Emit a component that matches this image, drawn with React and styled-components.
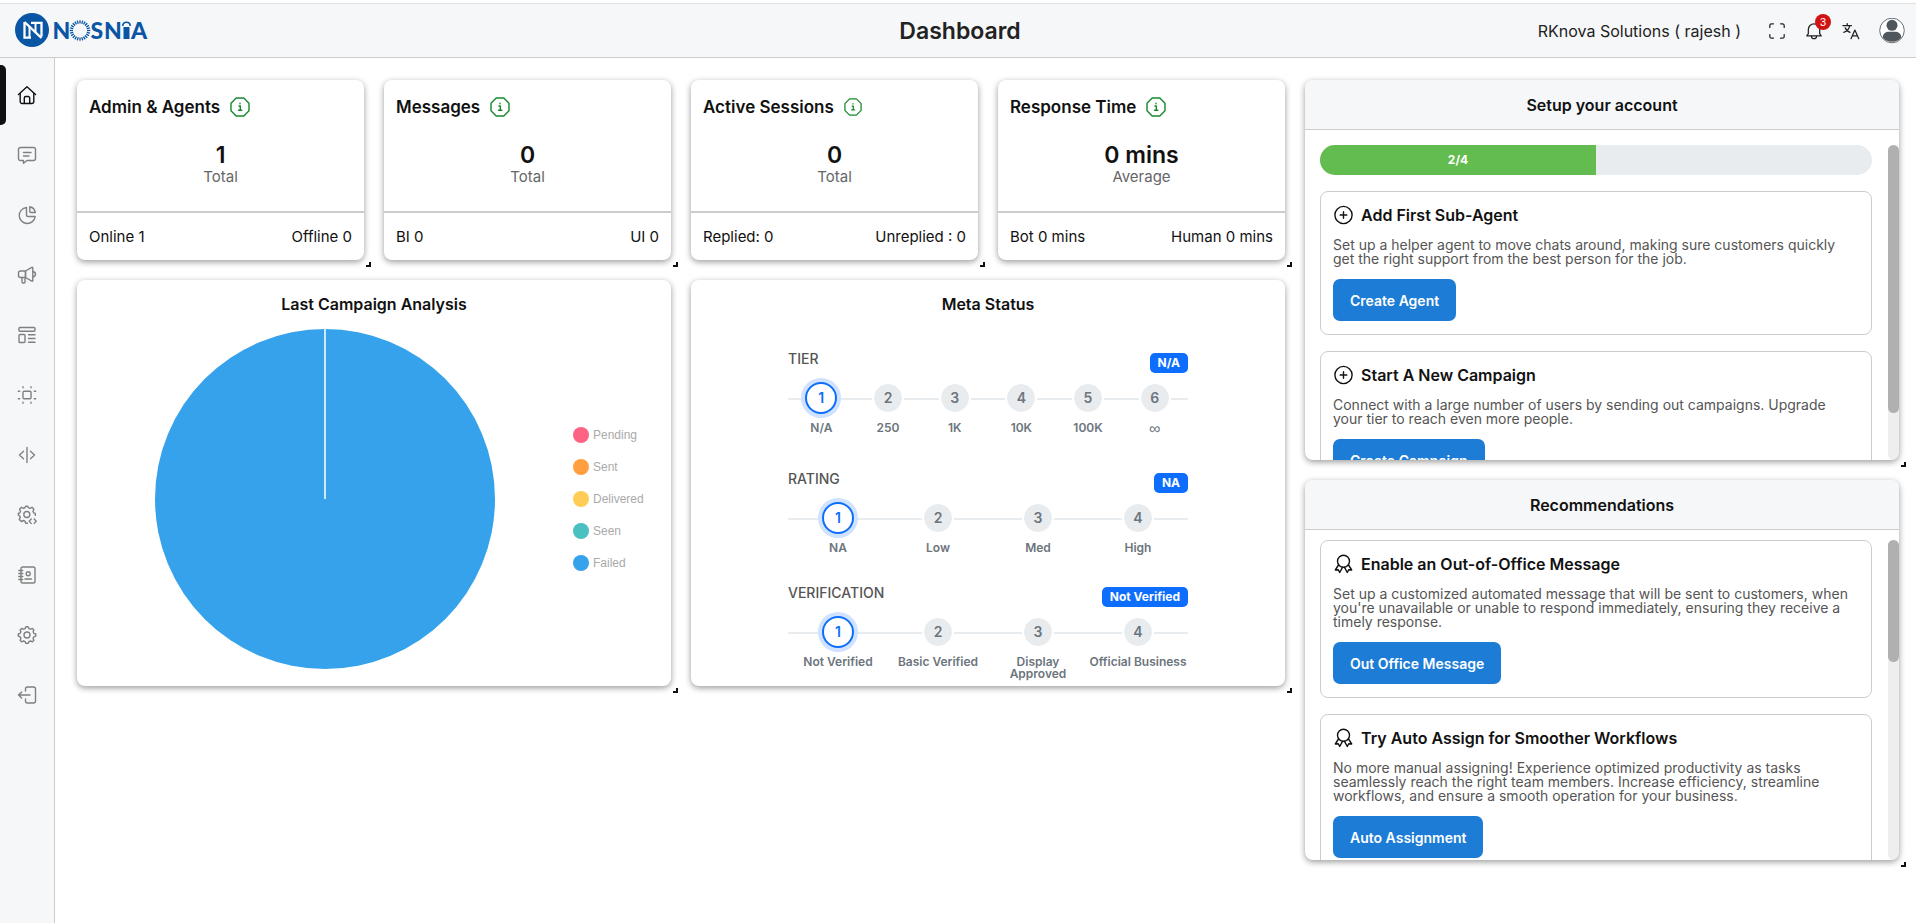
import React from "react";
import styled, { createGlobalStyle } from "styled-components";

const GlobalStyle = createGlobalStyle`
  * {
    box-sizing: border-box;
  }
  body {
    margin: 0;
    background: #fff;
    color: #111;
    font-family: Inter, "Liberation Sans", sans-serif;
  }
  h1, h2, h3, p, ul, ol {
    margin: 0;
    padding: 0;
  }
  ul, ol {
    list-style: none;
  }
`;

const stroke = {
  fill: "none",
  stroke: "currentColor",
  strokeWidth: 1.4,
  strokeLinecap: "round",
  strokeLinejoin: "round",
};

const icons = {
  home: (
    <>
      <path d="M1.5 9.6 10 1.8l8.5 7.8" />
      <path d="M3.2 8.500V16.500a2 2 0 0 0 2 2h9.600a2 2 0 0 0 2-2V8.500" />
      <path d="M7.300 18.300V13a1.500 1.500 0 0 1 1.500-1.500h2.400A1.500 1.500 0 0 1 12.700 13v5.300" />
    </>
  ),
  chat: (
    <>
      <path d="M3.500 2.500h13a2 2 0 0 1 2 2v9a2 2 0 0 1-2 2h-6.500l-3.500 2.700v-2.700h-3a2 2 0 0 1-2-2v-9a2 2 0 0 1 2-2z" />
      <path d="M6.500 7.500h7.500M6.500 11h5.500" />
    </>
  ),
  pie: (
    <>
      <path d="M9.500 2.500a8 8 0 1 0 8.700 9h-7.200A1.500 1.500 0 0 1 9.500 10z" />
      <path d="M12.800 1.800a7 7 0 0 1 5.500 5.700h-4.500a1 1 0 0 1-1-1z" />
    </>
  ),
  megaphone: (
    <>
      <path d="M8.500 6H3.500a2 2 0 0 0-2 2v2.500a2 2 0 0 0 2 2h5z" />
      <path d="M8.500 6 14.800 2.300a.7.700 0 0 1 1 .6v12.700a.7.700 0 0 1-1 .600L8.500 12.500z" />
      <path d="M16 6.800c1.600 0 2.500 1 2.500 2.400s-.9 2.400-2.500 2.400" />
      <path d="M5 12.500v4.500a1 1 0 0 0 1 1h1a1 1 0 0 0 1-1v-4.500" />
    </>
  ),
  template: (
    <>
      <rect x="2" y="2.500" width="16" height="3.700" rx="1" />
      <rect x="2" y="9.500" width="6" height="8" rx="1" />
      <path d="M11.500 9.800H18M11.500 13.500H18M11.500 17.200H18" />
    </>
  ),
  flow: (
    <>
      <rect x="6" y="6.200" width="8" height="7.600" rx="1" />
      <path d="M6 1.800v1M14 1.800v1M6 17.200v1M14 17.200v1M1.300 6.200h1.400M1.300 13.800h1.400M17.300 6.200h1.400M17.300 13.800h1.400" />
    </>
  ),
  code: <path d="M10 2.500v15M6.500 6.300 2.500 10l4 3.700M13.500 6.300l4 3.700-4 3.700" />,
  devSettings: (
    <>
      <path d="M10.500 18.300H8.700l-.7-2.100-1.600-.7-2 1L2.300 14.400l1-2-.7-1.600L1.300 10V8.500l1.500-.7.700-1.600-1-2 2-1.900 2 1 1.500-.7.700-1.300h2l.7 1.300 1.600.7 2-1 1.900 2-.9 1.900.6 1.600 1.700.6v2" />
      <circle cx="9.800" cy="9.500" r="3" />
      <path d="m14.200 14-2 2.200 2 2.200M17.200 14l2 2.200-2 2.200" />
    </>
  ),
  contacts: (
    <>
      <rect x="4" y="2" width="14" height="16" rx="1.800" />
      <circle cx="11.200" cy="8.800" r="2" />
      <path d="M8 14h6.500M1.800 5.500h4M1.800 8.500h4M1.800 11.500h4M1.800 14.500h4" />
    </>
  ),
  settings: (
    <>
      <path d="M8.900 1.800h2.200l.8 1.800 1.600.6 1.900-.8 1.500 1.500-.8 1.900.7 1.500 1.900.7v2.100l-1.900.8-.7 1.500.8 1.900-1.500 1.500-1.900-.8-1.600.6-.8 1.800H8.900l-.8-1.800-1.600-.6-1.900.8-1.500-1.500.8-1.900-.7-1.500-1.900-.8V9l1.900-.7.7-1.500-.8-1.900 1.500-1.500 1.900.8 1.600-.6z" />
      <circle cx="10" cy="10" r="3" />
    </>
  ),
  logout: (
    <>
      <path d="M8.500 6V4a2 2 0 0 1 2-2h6a2 2 0 0 1 2 2v12a2 2 0 0 1-2 2h-6a2 2 0 0 1-2-2v-2" />
      <path d="M13 10H1.500M4.700 7l-3.200 3 3.200 3" />
    </>
  ),
  expand: <path d="M2 6V4a2 2 0 0 1 2-2h2M14 2h2a2 2 0 0 1 2 2v2M18 14v2a2 2 0 0 1-2 2h-2M6 18H4a2 2 0 0 1-2-2v-2" />,
  bell: (
    <>
      <path d="M2 15.500h16l-1.700-2.500V8.300a6.300 6.300 0 0 0-12.600 0V13z" />
      <path d="M7.200 15.700a2.800 2.800 0 0 0 5.600 0" />
    </>
  ),
  translate: (
    <>
      <path d="M1 4h9.500M5.800 1.800V4M2 11.500C5 10.500 8 8 8.500 4M3.500 6.500c1 2.500 3 4.300 5.500 5" />
      <path d="M10 18.500l4.300-9.500 4.300 9.500M11.500 15.500h5.600" />
    </>
  ),
  plus: (
    <>
      <circle cx="10.500" cy="10" r="8.600" />
      <path d="M10.500 6.700v6.600M7.200 10h6.600" />
    </>
  ),
  badge: (
    <>
      <circle cx="10.500" cy="7.300" r="6" />
      <path d="M5.500 11 2.300 16l3-.2 1.400 2.700L9.500 13.300M15.500 11l3.200 5-3-.2-1.400 2.700-2.800-5.200" />
    </>
  ),
  info: (
    <>
      <path d="M6.200 1h7.600L19 6.200v7.600L13.800 19H6.200L1 13.800V6.200z" />
      <path d="M9 9h1.300v4M8.500 13.300h3.300M10 6.300v.4" />
    </>
  ),
};

function Icon({ name, size = 20 }) {
  return (
    <svg width={size} height={size} viewBox="0 0 20 20" aria-hidden="true" {...stroke}>
      {icons[name]}
    </svg>
  );
}

function Logo() {
  const rays = Array.from({ length: 24 }, (_, i) => i * 15);
  return (
    <svg width="134" height="34" viewBox="0 0 134 34" role="img" aria-label="NOSNIA">
      <circle cx="17" cy="16" r="17" fill="#0b56a4" />
      <path d="M9.500 8v15.700h6.500M16 8.800h10.500v13.700" fill="none" stroke="#fff" strokeWidth="2.300" />
      <path d="M9.500 8 26.500 24" stroke="#fff" strokeWidth="2.400" />
      <path d="M14.500 12v11M20.500 9v10" stroke="#fff" strokeWidth="2" />
      <g fill="#0b56a4" fontFamily="Lato, sans-serif" fontWeight="900" fontSize="23">
        <text x="37.500" y="25">N</text>
        <text x="75.500" y="25">S</text>
        <text x="89" y="25">N</text>
        <text x="116" y="25">A</text>
      </g>
      <g stroke="#0b56a4" strokeWidth="1.300">
        {rays.map((a) => (
          <path key={a} d="M65 9.500V6.200" transform={`rotate(${a} 65 16.500)`} />
        ))}
      </g>
      <path d="M108.500 13h6v12h-6z" fill="#0b56a4" />
      <path d="M107.800 12c0-5 7.400-5 7.400 0" fill="none" stroke="#0b56a4" strokeWidth="1.600" />
    </svg>
  );
}

const navItems = [
  { icon: "home", label: "Home" },
  { icon: "chat", label: "Chats" },
  { icon: "pie", label: "Analytics" },
  { icon: "megaphone", label: "Campaigns" },
  { icon: "template", label: "Templates" },
  { icon: "flow", label: "Flows" },
  { icon: "code", label: "Integrations" },
  { icon: "devSettings", label: "Developer settings" },
  { icon: "contacts", label: "Contacts" },
  { icon: "settings", label: "Settings" },
  { icon: "logout", label: "Log out" },
];

const stats = [
  { title: "Admin & Agents", value: "1", unit: "Total", left: "Online 1", right: "Offline 0" },
  { title: "Messages", value: "0", unit: "Total", left: "BI 0", right: "UI 0" },
  { title: "Active Sessions", value: "0", unit: "Total", left: "Replied: 0", right: "Unreplied : 0", iconSize: 18 },
  { title: "Response Time", value: "0 mins", unit: "Average", left: "Bot 0 mins", right: "Human 0 mins" },
];

const legend = [
  { label: "Pending", color: "#ff6384" },
  { label: "Sent", color: "#ff9f40" },
  { label: "Delivered", color: "#ffcd56" },
  { label: "Seen", color: "#4bc0c0" },
  { label: "Failed", color: "#36a2eb" },
];

const meta = [
  { title: "TIER", status: "N/A", steps: ["N/A", "250", "1K", "10K", "100K", "∞"] },
  { title: "RATING", status: "NA", steps: ["NA", "Low", "Med", "High"] },
  { title: "VERIFICATION", status: "Not Verified", steps: ["Not Verified", "Basic Verified", "Display Approved", "Official Business"] },
];

const setupTasks = [
  {
    title: "Add First Sub-Agent",
    text: "Set up a helper agent to move chats around, making sure customers quickly get the right support from the best person for the job.",
    action: "Create Agent",
  },
  {
    title: "Start A New Campaign",
    text: "Connect with a large number of users by sending out campaigns. Upgrade your tier to reach even more people.",
    action: "Create Campaign",
  },
];

const recommendations = [
  {
    title: "Enable an Out-of-Office Message",
    text: "Set up a customized automated message that will be sent to customers, when you're unavailable or unable to respond immediately, ensuring they receive a timely response.",
    action: "Out Office Message",
  },
  {
    title: "Try Auto Assign for Smoother Workflows",
    text: "No more manual assigning! Experience optimized productivity as tasks seamlessly reach the right team members. Increase efficiency, streamline workflows, and ensure a smooth operation for your business.",
    action: "Auto Assignment",
  },
];

function Task({ icon, task }) {
  return (
    <TaskCard>
      <TaskTitle>
        <Icon name={icon} />
        {task.title}
      </TaskTitle>
      <TaskText>{task.text}</TaskText>
      <ActionButton type="button">{task.action}</ActionButton>
    </TaskCard>
  );
}

export default function App() {
  return (
    <Page>
      <GlobalStyle />
      <Header>
        <LogoLink href="#home">
          <Logo />
        </LogoLink>
        <PageTitle>Dashboard</PageTitle>
        <Account>
          <AccountName>RKnova Solutions ( rajesh )</AccountName>
          <IconButton type="button" aria-label="Full screen">
            <Icon name="expand" size={18} />
          </IconButton>
          <IconButton type="button" aria-label="Notifications">
            <Icon name="bell" size={18} />
            <Count>3</Count>
          </IconButton>
          <IconButton type="button" aria-label="Language">
            <Icon name="translate" size={18} />
          </IconButton>
          <IconButton type="button" aria-label="Profile">
            <svg width="26" height="26" viewBox="0 0 26 26" aria-hidden="true">
              <circle cx="13" cy="12.500" r="12.300" fill="#fff" stroke="#6b6f73" />
              <circle cx="13" cy="7.300" r="5.500" fill="#50575c" />
              <path d="M3.800 19.500c0-4 3.200-5.700 6.200-5.700h6c3 0 6.200 1.700 6.200 5.700-1.500 2.500-5 4.200-9.200 4.200S5.300 22 3.800 19.500z" fill="#50575c" />
            </svg>
          </IconButton>
        </Account>
      </Header>
      <Content>
        <Sidebar>
          {navItems.map((item, index) => (
            <NavLink key={item.icon} href={`#${item.icon}`} aria-label={item.label} $active={index === 0}>
              <Icon name={item.icon} />
            </NavLink>
          ))}
        </Sidebar>
        <Board>
          <Overview>
            {stats.map((stat) => (
              <Card key={stat.title}>
                <StatTitle>
                  {stat.title}
                  <Info>
                    <Icon name="info" size={stat.iconSize} />
                  </Info>
                </StatTitle>
                <StatBody>
                  <StatValue>{stat.value}</StatValue>
                  <StatUnit>{stat.unit}</StatUnit>
                </StatBody>
                <StatFooter>
                  <span>{stat.left}</span>
                  <span>{stat.right}</span>
                </StatFooter>
                <Resize />
              </Card>
            ))}
            <Card $wide>
              <CardTitle>Last Campaign Analysis</CardTitle>
              <ChartRow>
                <PieArea>
                  <svg width="340" height="340" viewBox="0 0 340 340" role="img" aria-label="Failed 100%">
                    <circle cx="170" cy="170" r="170" fill="#36a2eb" />
                    <path d="M170 0v170" stroke="#fff" strokeWidth="1.500" />
                  </svg>
                </PieArea>
                <Legend>
                  {legend.map((entry) => (
                    <LegendItem key={entry.label} $color={entry.color}>
                      {entry.label}
                    </LegendItem>
                  ))}
                </Legend>
              </ChartRow>
              <Resize />
            </Card>
            <Card $wide>
              <CardTitle>Meta Status</CardTitle>
              <MetaList>
                {meta.map((group) => (
                  <section key={group.title}>
                    <MetaHead>
                      <MetaTitle>{group.title}</MetaTitle>
                      <Status>{group.status}</Status>
                    </MetaHead>
                    <Steps>
                      {group.steps.map((step, index) => (
                        <Step key={step}>
                          <StepNumber $active={index === 0}>{index + 1}</StepNumber>
                          <StepLabel $symbol={step === "∞"}>{step}</StepLabel>
                        </Step>
                      ))}
                    </Steps>
                  </section>
                ))}
              </MetaList>
              <Resize />
            </Card>
          </Overview>
          <Side>
            <Card>
              <PanelTitle>Setup your account</PanelTitle>
              <PanelBody $top={15}>
                <PanelList>
                  <Progress role="progressbar" aria-valuenow={2} aria-valuemax={4} aria-label="Setup progress">
                    <ProgressFill style={{ width: `${(2 / 4) * 100}%` }}>2/4</ProgressFill>
                  </Progress>
                  {setupTasks.map((task) => (
                    <Task key={task.title} icon="plus" task={task} />
                  ))}
                </PanelList>
                <ScrollTrack>
                  <ScrollThumb $size={85} />
                </ScrollTrack>
              </PanelBody>
              <Resize />
            </Card>
            <Card>
              <PanelTitle>Recommendations</PanelTitle>
              <PanelBody $top={10}>
                <PanelList>
                  {recommendations.map((task) => (
                    <Task key={task.title} icon="badge" task={task} />
                  ))}
                </PanelList>
                <ScrollTrack>
                  <ScrollThumb $size={38} />
                </ScrollTrack>
              </PanelBody>
              <Resize />
            </Card>
          </Side>
        </Board>
      </Content>
    </Page>
  );
}

const Page = styled.div`
  display: flex;
  flex-direction: column;
  min-height: 100vh;
  padding-top: 3px;
`;

const Header = styled.header`
  display: grid;
  grid-template-columns: 1fr auto 1fr;
  align-items: center;
  height: 55px;
  padding: 0 11px 0 15px;
  background: #f6f7f9;
  border-top: 1px solid #e0e1e3;
  border-bottom: 1px solid #ccc;
`;

const LogoLink = styled.a`
  display: flex;
  width: max-content;

  svg {
    overflow: visible;
  }
`;

const PageTitle = styled.h1`
  font-size: 23px;
  font-weight: 600;
  line-height: 30px;
  color: #222;
`;

const Account = styled.div`
  display: flex;
  align-items: center;
  justify-content: flex-end;
  gap: 19px;
`;

const AccountName = styled.span`
  margin-right: 8px;
  font-size: 16px;
  line-height: 20px;
  color: #222;
`;

const IconButton = styled.button`
  position: relative;
  display: flex;
  padding: 0;
  border: 0;
  background: none;
  color: #222;
  cursor: pointer;
`;

const Count = styled.span`
  position: absolute;
  top: -8px;
  right: -8px;
  width: 16px;
  border-radius: 50%;
  background: #cf1313;
  color: #fff;
  font-size: 11px;
  font-weight: 500;
  line-height: 16px;
  text-align: center;
`;

const Content = styled.div`
  display: flex;
  flex: 1;
`;

const Sidebar = styled.nav`
  width: 55px;
  flex-shrink: 0;
  padding-top: 7px;
  background: #f6f7f9;
  border-right: 1px solid #ccc;
`;

const NavLink = styled.a`
  display: flex;
  align-items: center;
  gap: 11px;
  height: 60px;
  color: ${({ $active }) => ($active ? "#111" : "#808080")};

  &::before {
    content: "";
    align-self: stretch;
    width: 6px;
    border-radius: 0 5px 5px 0;
    background: ${({ $active }) => ($active ? "#111" : "transparent")};
  }
`;

const Board = styled.main`
  display: grid;
  flex: 1;
  grid-template-columns: repeat(6, minmax(0, 1fr));
  align-content: start;
  gap: 20px;
  padding: 22px 17px 22px 22px;
`;

const Overview = styled.div`
  display: grid;
  grid-column: span 4;
  grid-template-columns: subgrid;
  grid-template-rows: 180px 406px;
  gap: 20px;
`;

const Side = styled.div`
  display: grid;
  grid-column: span 2;
  grid-template-rows: 380px 380px;
  gap: 20px;
`;

const Card = styled.section`
  position: relative;
  display: flex;
  flex-direction: column;
  grid-column: ${({ $wide }) => ($wide ? "span 2" : "auto")};
  min-height: 0;
  border-radius: 8px;
  background: #fff;
  box-shadow: 0 2px 6px rgba(0, 0, 0, 0.4);
`;

const Resize = styled.span`
  position: absolute;
  right: -7px;
  bottom: -7px;
  width: 5px;
  height: 5px;
  border-right: 2px solid #111;
  border-bottom: 2px solid #111;
`;

const StatTitle = styled.h2`
  display: flex;
  align-items: center;
  gap: 10px;
  padding: 17px 12px 0;
  font-size: 17px;
  font-weight: 600;
  line-height: 20px;
`;

const Info = styled.span`
  display: flex;
  color: #15892b;
`;

const StatBody = styled.div`
  flex: 1;
  padding-top: 25px;
  text-align: center;
`;

const StatValue = styled.p`
  font-size: 23px;
  font-weight: 600;
  line-height: 26px;
`;

const StatUnit = styled.p`
  font-size: 15px;
  line-height: 18px;
  color: #666;
`;

const StatFooter = styled.div`
  display: flex;
  justify-content: space-between;
  padding: 14px 12px 13px;
  border-top: 2px solid #ccc;
  font-size: 15px;
  line-height: 20px;
`;

const CardTitle = styled.h2`
  padding-top: 14px;
  font-size: 16px;
  font-weight: 600;
  line-height: 20px;
  text-align: center;
`;

const ChartRow = styled.div`
  display: flex;
  align-items: center;
  padding: 15px 14px 17px 0;
`;

const PieArea = styled.div`
  display: flex;
  flex: 1;
  justify-content: center;
`;

const Legend = styled.ul`
  display: grid;
  gap: 16px;
  width: 84px;
`;

const LegendItem = styled.li`
  display: flex;
  align-items: center;
  gap: 4px;
  font-family: "Liberation Sans", Arial, sans-serif;
  font-size: 12px;
  line-height: 16px;
  color: #aaa;

  &::before {
    content: "";
    width: 16px;
    height: 16px;
    border-radius: 50%;
    background: ${({ $color }) => $color};
  }
`;

const MetaList = styled.div`
  display: grid;
  gap: 29px;
  width: 400px;
  margin: 35px auto 0;
`;

const MetaHead = styled.div`
  display: flex;
  justify-content: space-between;
  align-items: flex-end;
  height: 24px;
`;

const MetaTitle = styled.h3`
  align-self: flex-start;
  font-size: 14px;
  font-weight: 500;
  line-height: 20px;
  color: #555;
`;

const Status = styled.span`
  padding: 0 8px;
  border-radius: 5px;
  background: #0d6efd;
  color: #fff;
  font-size: 12px;
  font-weight: 700;
  line-height: 20px;
`;

const Steps = styled.ol`
  display: flex;
  padding-top: 9px;
`;

const Step = styled.li`
  display: flex;
  flex: 1 1 0;
  flex-direction: column;
  align-items: center;
  gap: 8px;
  min-width: 0;
  background: linear-gradient(#e9ecef, #e9ecef) 0 16px / 100% 2px no-repeat;
`;

const StepNumber = styled.span`
  width: 32px;
  border: 2px solid ${({ $active }) => ($active ? "#0d6efd" : "#fff")};
  border-radius: 50%;
  background: ${({ $active }) => ($active ? "#fff" : "#e9ecef")};
  background-clip: padding-box;
  box-shadow: ${({ $active }) => ($active ? "0 0 0 4px #cfe2ff" : "none")};
  color: ${({ $active }) => ($active ? "#0d6efd" : "#6c757d")};
  font-size: 14px;
  font-weight: 600;
  line-height: 28px;
  text-align: center;
`;

const StepLabel = styled.span`
  padding-bottom: ${({ $symbol }) => ($symbol ? "4px" : "0")};
  font-family: ${({ $symbol }) => ($symbol ? '"Liberation Sans", sans-serif' : "inherit")};
  font-size: ${({ $symbol }) => ($symbol ? "16px" : "12px")};
  font-weight: ${({ $symbol }) => ($symbol ? 400 : 600)};
  line-height: ${({ $symbol }) => ($symbol ? "14px" : "12px")};
  color: #6c757d;
  text-align: center;
`;

const PanelTitle = styled.h2`
  padding: 15px 0 14px;
  border-bottom: 1px solid #ccc;
  border-radius: 8px 8px 0 0;
  background: #f6f7f9;
  font-size: 16px;
  font-weight: 600;
  line-height: 20px;
  text-align: center;
`;

const PanelBody = styled.div`
  display: flex;
  flex: 1;
  min-height: 0;
  margin-top: ${({ $top }) => $top}px;
  border-radius: 0 0 8px 8px;
  overflow: hidden;
`;

const PanelList = styled.div`
  display: grid;
  flex: 1;
  align-content: start;
  gap: 16px;
  padding: 0 16px 0 15px;
  overflow-y: auto;
  scrollbar-width: none;
`;

const ScrollTrack = styled.div`
  width: 11px;
  border-radius: 6px;
  background: #eee;
`;

const ScrollThumb = styled.div`
  height: ${({ $size }) => $size}%;
  border-radius: 6px;
  background: #b0b0b0;
`;

const Progress = styled.div`
  height: 30px;
  border-radius: 15px;
  background: #e9ecef;
  overflow: hidden;
`;

const ProgressFill = styled.div`
  height: 100%;
  background: #63bc50;
  color: #fff;
  font-size: 12px;
  font-weight: 700;
  line-height: 30px;
  text-align: center;
`;

const TaskCard = styled.article`
  padding: 11px 12px 13px;
  border: 1px solid #ccc;
  border-radius: 8px;
`;

const TaskTitle = styled.h3`
  display: flex;
  align-items: center;
  gap: 8px;
  font-size: 16px;
  font-weight: 600;
  line-height: 24px;
`;

const TaskText = styled.p`
  margin: 11px 0 13px;
  font-size: 14px;
  line-height: 14px;
  color: #555;
`;

const ActionButton = styled.button`
  display: block;
  height: 42px;
  padding: 0 17px;
  border: 0;
  border-radius: 7px;
  background: #1c7cd6;
  color: #fff;
  font: inherit;
  font-size: 14px;
  font-weight: 600;
  cursor: pointer;
`;
